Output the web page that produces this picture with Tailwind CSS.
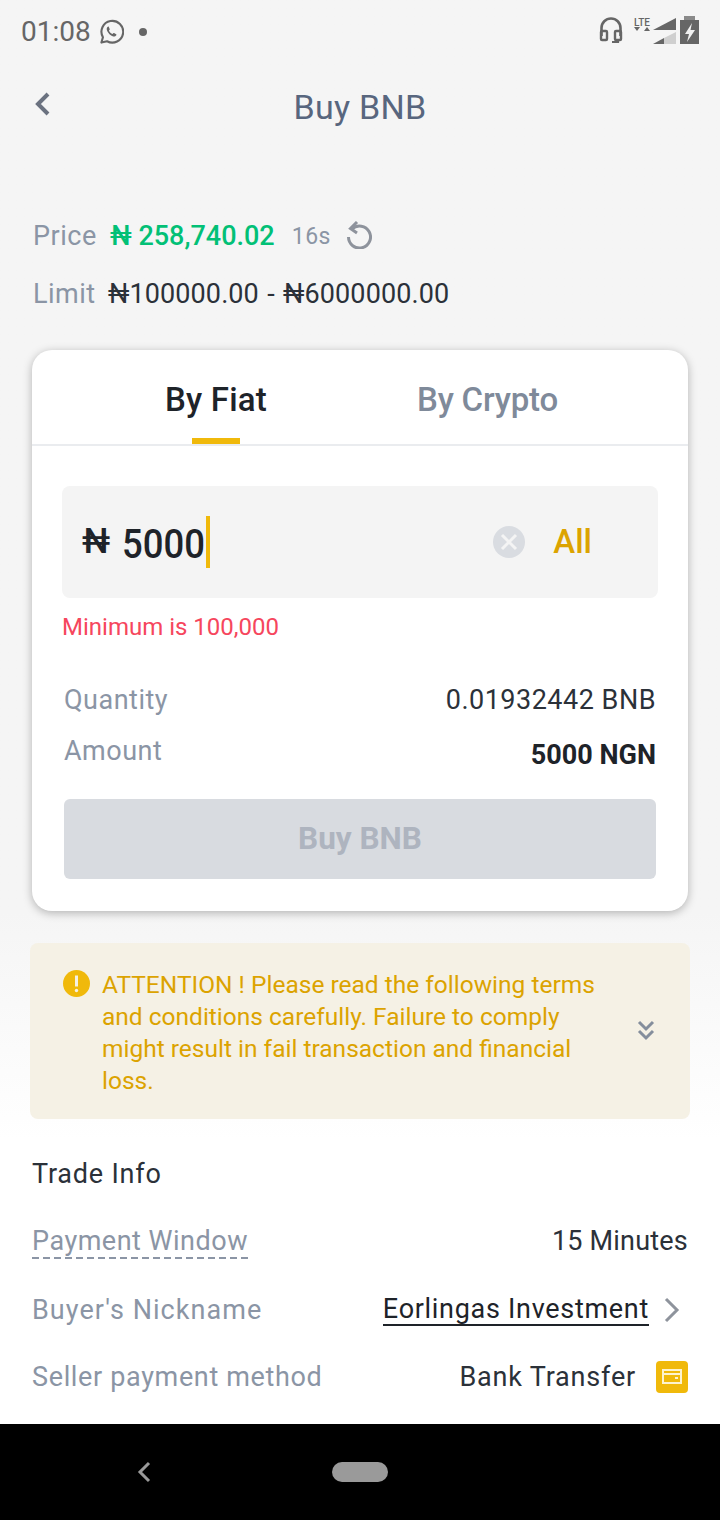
<!DOCTYPE html>
<html lang="en">
<head>
    <meta charset="UTF-8">
    <meta name="viewport" content="width=device-width, initial-scale=1.0">
    <title>Buy BNB</title>
    <script src="https://cdn.jsdelivr.net/npm/@tailwindcss/browser@4"></script>
</head>
<body class="m-0 font-['Roboto',sans-serif]">
<div class="w-[720px] h-[1520px] flex flex-col overflow-hidden bg-gradient-to-b from-[#f5f5f5] from-[60%] to-white to-[75%]">

    <!-- status bar -->
    <div class="h-[60px] flex items-center justify-between pl-[21px] pr-[20px] text-[#666666]">
        <div class="flex items-center relative top-[2px]">
            <span class="text-[28px] leading-none">01:08</span>
            <svg class="ml-[8px]" width="25" height="26" viewBox="0 0 26 26" fill="none">
                <path d="M2.500 24l1.600-5.600A11.300 11.300 0 1 1 8.400 22.600z" stroke="#666" stroke-width="2.200" stroke-linejoin="round"/>
                <path d="M9.200 7.500c-1.400 1-1.600 2.800-.4 5 1.300 2.400 3.200 4.100 5.400 5 1.600.6 3 .1 3.800-1.100.2-.5.2-.9-.1-1.100l-2.200-1.200c-.4-.2-.7 0-.9.2l-.7.9c-1.700-.6-3-2-3.800-3.700l.7-.8c.2-.3.2-.6.1-.9l-.9-2.100c-.2-.4-.6-.5-1-.2z" fill="#666"/>
            </svg>
            <span class="ml-[15px] w-[8px] h-[8px] rounded-full bg-[#666666]"></span>
        </div>
        <div class="flex items-center h-[28px]">
            <svg width="24" height="28" viewBox="0 0 24 28" fill="none">
                <path d="M2.500 20v-8a9.500 9.500 0 0 1 19 0v8" stroke="#666" stroke-width="2.600"/>
                <rect x="2" y="15" width="6" height="9" rx="1" stroke="#666" stroke-width="2.400"/>
                <rect x="16" y="15" width="6" height="9" rx="1" stroke="#666" stroke-width="2.400"/>
                <path d="M19 24v2h-6" stroke="#666" stroke-width="2.200"/>
            </svg>
            <div class="ml-[10px] w-[18px] h-[28px] flex flex-col items-center pt-[2px] text-[#666666]">
                <span class="text-[10px] font-medium leading-[9px]">LTE</span>
                <svg width="16" height="4" viewBox="0 0 16 4"><path d="M0 0h6L3 4zM10 4h6l-3-4z" fill="#666"/></svg>
            </div>
            <svg class="ml-[2px]" width="24" height="28" viewBox="0 0 24 28">
                <path d="M0 14L23 2V14z" fill="#666"/>
                <path d="M0 28L11 22V28z" fill="#666"/>
                <path d="M11 22L23 16V28H11z" fill="#cfcfcf"/>
            </svg>
            <svg class="ml-[3px]" width="20" height="28" viewBox="0 0 20 28">
                <rect x="0" y="4" width="19" height="24" fill="#666"/>
                <rect x="4" y="0" width="11" height="4" fill="#8a8a8a"/>
                <path d="M12 7L5 18h4l-2 8 8-12h-4.500z" fill="#f0f0f0"/>
            </svg>
        </div>
    </div>

    <!-- title bar -->
    <div class="relative h-[94px] flex items-center justify-center text-[34px] tracking-[0.300px] text-[#58667e]">
        <span>Buy BNB</span>
        <svg class="absolute left-[33px] top-[31px]" width="18" height="26" viewBox="0 0 18 26" fill="none">
            <path d="M15 3L5 13l10 10" stroke="#6b7280" stroke-width="4"/>
        </svg>
    </div>

    <!-- price and limit -->
    <div class="pl-[33px] pt-[66px] text-[27px] leading-none">
        <div class="flex items-center h-[32px]">
            <span class="text-[#8b95a5] w-[77px] tracking-[0.500px]">Price</span>
            <span class="text-[#02c076] font-medium">₦ 258,740.02</span>
            <span class="ml-[17px] text-[#8b95a5] text-[23px] tracking-[0.500px]">16s</span>
            <svg class="ml-[15px] relative -top-[1px]" width="26" height="28" viewBox="0 0 26 28" fill="none">
                <path d="M6 8a11 11 0 1 1-3.500 8" stroke="#8e939c" stroke-width="3"/>
                <path d="M11 1L4.500 7.500 11 12" stroke="#8e939c" stroke-width="3"/>
            </svg>
        </div>
        <div class="flex items-center h-[32px] mt-[26px]">
            <span class="text-[#8b95a5] w-[75px] tracking-[0.500px]">Limit</span>
            <span class="text-[#2b3139] tracking-[0.100px] [word-spacing:1.500px]">₦100000.00 - ₦6000000.00</span>
        </div>
    </div>

    <!-- order card -->
    <div class="mx-[32px] mt-[40px] h-[561px] shrink-0 rounded-[20px] bg-white shadow-[0_2px_10px_rgba(0,0,0,0.28)] flex flex-col">
        <div class="h-[96px] flex border-b-2 border-[#eaecef] text-[33px] font-medium">
            <div class="relative w-[368px] flex justify-center pt-[25px] text-[#1e2329] tracking-[0.200px]">
                By Fiat
                <span class="absolute bottom-[0px] left-[160px] w-[48px] h-[6px] bg-[#f0b90b]"></span>
            </div>
            <div class="flex-1 flex justify-start pt-[25px] pl-[17px] text-[#7f8a9a] tracking-[-0.200px]">By Crypto</div>
        </div>

        <div class="px-[30px] pt-[40px]">
            <div class="h-[112px] rounded-[8px] bg-[#f4f4f4] flex items-center pl-[20px]">
                <span class="text-[35px] text-[#1e2329] font-medium">₦</span>
                <span class="ml-[12px] -mr-[9px] relative top-[2px] text-[41px] font-medium text-[#1e2329] leading-none origin-left scale-x-[0.89]">5000</span>
                <span class="w-[4px] h-[52px] bg-[#f0b90b]"></span>
                <span class="ml-auto w-[32px] h-[32px] rounded-full bg-[#d9dce1] flex items-center justify-center">
                    <svg width="18" height="18" viewBox="0 0 18 18"><path d="M2 2l14 14M16 2L2 16" stroke="#f4f4f4" stroke-width="3"/></svg>
                </span>
                <span class="ml-[28px] mr-[66px] text-[33px] font-medium text-[#dca300]">All</span>
            </div>
            <div class="mt-[14px] text-[24px] leading-[30px] text-[#f6465d]">Minimum is 100,000</div>
        </div>

        <div class="px-[32px] pt-[42px] text-[27px] tracking-[0.500px] leading-none">
            <div class="flex items-center justify-between h-[32px]">
                <span class="text-[#8b95a5]">Quantity</span>
                <span class="text-[#2b3139]">0.01932442 BNB</span>
            </div>
            <div class="flex items-center justify-between h-[32px] mt-[21px]">
                <span class="text-[#8b95a5] relative -top-[2px]">Amount</span>
                <span class="text-[#1e2329] font-bold relative top-[2px] tracking-normal">5000 NGN</span>
            </div>
            <div class="mt-[30px] h-[80px] rounded-[6px] bg-[#d8dbe0] flex items-center justify-center text-[31.500px] font-bold tracking-normal text-[#aeb4bf]">Buy BNB</div>
        </div>
    </div>

    <!-- attention notice -->
    <div class="mx-[30px] mt-[32px] h-[176px] shrink-0 rounded-[8px] bg-[#f5f1e5] flex pl-[33px] pt-[26px] text-[#dca300]">
        <svg class="mt-[1px] shrink-0" width="27" height="27" viewBox="0 0 27 27">
            <circle cx="13.500" cy="13.500" r="13.500" fill="#f0b90b"/>
            <path d="M13.500 5.500v11" stroke="#f5f1e5" stroke-width="3"/>
            <circle cx="13.500" cy="20.500" r="1.700" fill="#f5f1e5"/>
        </svg>
        <div class="ml-[12px] w-[515px] shrink-0 text-[24.500px] leading-[32px]">ATTENTION ! Please read the following terms<br>and conditions carefully. Failure to comply<br>might result in fail transaction and financial<br>loss.</div>
        <svg class="ml-[20px] mt-[51px]" width="18" height="22" viewBox="0 0 18 22" fill="none">
            <path d="M2 2l7 7 7-7M2 11l7 7 7-7" stroke="#848e9c" stroke-width="3"/>
        </svg>
    </div>

    <!-- trade info -->
    <div class="px-[32px] pt-[39px] text-[27px] tracking-[0.700px] leading-none">
        <div class="h-[32px] flex items-center text-[#2b3139] tracking-[0.800px]">Trade Info</div>
        <div class="mt-[35px] h-[32px] flex items-center justify-between">
            <span class="relative text-[#8b95a5] tracking-[0.500px]">
                Payment Window
                <span class="absolute left-0 right-0 -bottom-[4px] h-[2px] bg-[repeating-linear-gradient(90deg,#8b95a5_0_7px,transparent_7px_11px)]"></span>
            </span>
            <span class="text-[#2b3139] tracking-[0.200px]">15 Minutes</span>
        </div>
        <div class="mt-[37px] h-[32px] flex items-center justify-between">
            <span class="text-[#8b95a5] tracking-[1.050px]">Buyer's Nickname</span>
            <div class="flex items-center">
                <span class="text-[#1e2329] border-b-2 border-[#1e2329] leading-[30px] relative top-[0px]">Eorlingas Investment</span>
                <svg class="ml-[15px] mr-[7px]" width="17" height="26" viewBox="0 0 17 26" fill="none">
                    <path d="M2 2l11 11L2 24" stroke="#8e939c" stroke-width="3"/>
                </svg>
            </div>
        </div>
        <div class="mt-[35px] h-[32px] flex items-center justify-between">
            <span class="text-[#8b95a5] tracking-[0.650px]">Seller payment method</span>
            <div class="flex items-center">
                <span class="text-[#2b3139] tracking-[0.800px]">Bank Transfer</span>
                <span class="ml-[20px] w-[32px] h-[32px] rounded-[4px] bg-[#f0b90b] flex items-center justify-center">
                    <svg width="20" height="16" viewBox="0 0 20 16" fill="none">
                        <rect x="1" y="1" width="18" height="13" stroke="#fdf3cf" stroke-width="2"/>
                        <path d="M1 5h18" stroke="#fdf3cf" stroke-width="2"/>
                        <rect x="13" y="8" width="3" height="2" fill="#fdf3cf"/>
                    </svg>
                </span>
            </div>
        </div>
    </div>

    <!-- navigation bar -->
    <div class="mt-auto h-[96px] bg-black flex items-center shrink-0">
        <svg class="ml-[136px]" width="16" height="22" viewBox="0 0 16 22" fill="none">
            <path d="M13 2L4 11l9 9" stroke="#9a9a9a" stroke-width="3"/>
        </svg>
        <span class="ml-[180px] w-[56px] h-[20px] rounded-full bg-[#9a9a9a]"></span>
    </div>
</div>
</body>
</html>
